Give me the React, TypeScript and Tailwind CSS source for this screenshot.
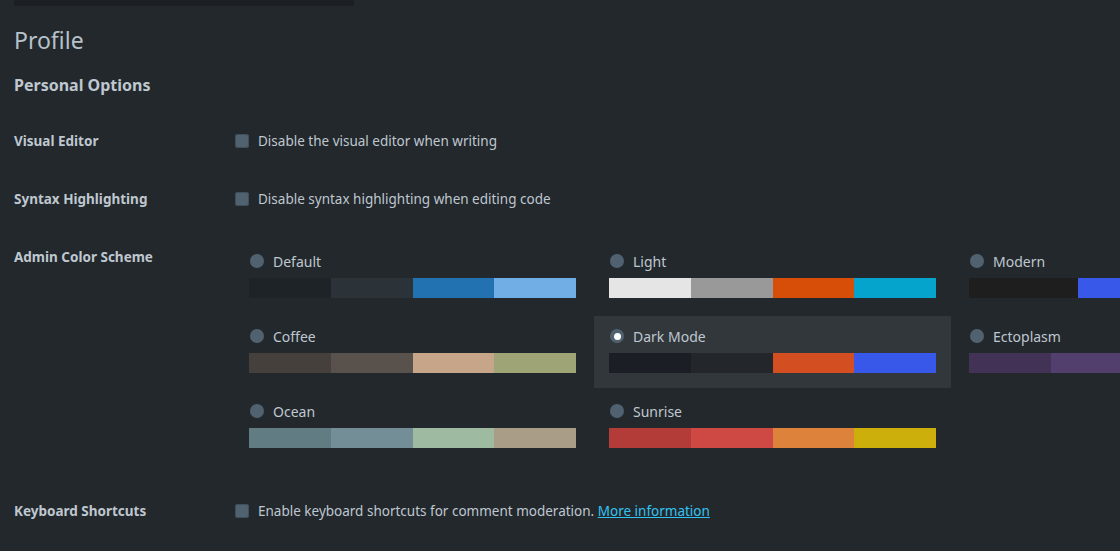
const schemes = [
  { name: "Default", colors: ["#1d2327", "#2c3338", "#2271b1", "#72aee6"] },
  { name: "Light", colors: ["#e5e5e5", "#999999", "#d64e07", "#04a4cc"] },
  { name: "Modern", colors: ["#1e1e1e", "#3858e9", "#33f078"] },
  { name: "Coffee", colors: ["#46403c", "#59524c", "#c7a589", "#9ea476"] },
  { name: "Dark Mode", colors: ["#1b1f25", "#23272b", "#d34e21", "#3858e9"], selected: true },
  { name: "Ectoplasm", colors: ["#413256", "#523f6d", "#a3b745", "#d46f15"] },
  { name: "Ocean", colors: ["#627c83", "#738e96", "#9ebaa0", "#aa9d88"] },
  { name: "Sunrise", colors: ["#b43c38", "#cf4944", "#dd823b", "#ccaf0b"] },
]

function Checkbox() {
  return <span className="block h-[14px] w-[14px] shrink-0 rounded-[3px] bg-[#50626f] shadow-[inset_0_0_0_1px_#3f4e59]" />
}

function Radio({ checked }: { checked?: boolean }) {
  return (
    <span className="flex h-[14px] w-[14px] shrink-0 items-center justify-center rounded-full bg-[#50626f]">
      {checked && <span className="block h-[7px] w-[7px] rounded-full bg-white" />}
    </span>
  )
}

function SchemeOption({ name, colors, selected }: { name: string; colors: string[]; selected?: boolean }) {
  return (
    <div className={`h-[72px] w-[357px] px-[15px] pt-[10px] ${selected ? "bg-[#32373c]" : ""}`}>
      <div className="flex h-[20px] items-center gap-[9px] pl-[1px]">
        <Radio checked={selected} />
        <span className="text-[14px]">{name}</span>
      </div>
      <div className="mt-[7px] flex h-[20px]">
        {colors.map((c) => (
          <div key={c} className="h-full flex-1" style={{ background: c }} />
        ))}
      </div>
    </div>
  )
}

export default function App() {
  return (
    <div className="h-[551px] overflow-hidden bg-[#23282d] pl-[14px] font-['Noto_Sans',sans-serif] text-[#bfc7cf]">
      <div className="h-[6px] w-[340px] bg-[#1c2024]" />
      <h1 className="mt-[20px] text-[23px] leading-[29px] font-normal text-[#b7c1ca]">Profile</h1>
      <h2 className="mt-[20px] text-[16px] leading-[20px] font-bold">Personal Options</h2>

      <div className="mt-[36px] flex h-[20px] items-center">
        <div className="w-[220px] text-[13.5px] font-bold">Visual Editor</div>
        <div className="flex items-center gap-[9px] pl-[1px] text-[13.5px]">
          <Checkbox />
          <span>Disable the visual editor when writing</span>
        </div>
      </div>

      <div className="mt-[38px] flex h-[20px] items-center">
        <div className="w-[220px] text-[13.5px] font-bold">Syntax Highlighting</div>
        <div className="flex items-center gap-[9px] pl-[1px] text-[13.5px]">
          <Checkbox />
          <span>Disable syntax highlighting when editing code</span>
        </div>
      </div>

      <div className="mt-[32px] flex">
        <div className="w-[220px] shrink-0 pt-[6px] text-[13.5px] leading-[20px] font-bold">Admin Color Scheme</div>
        <div className="grid grid-cols-[357px_357px_357px] gap-x-[3px] gap-y-[3px]">
          {schemes.map((s) => (
            <SchemeOption key={s.name} {...s} />
          ))}
        </div>
      </div>

      <div className="mt-[38px] flex h-[20px] items-center">
        <div className="w-[220px] text-[13.5px] font-bold">Keyboard Shortcuts</div>
        <div className="flex items-center gap-[9px] pl-[1px] text-[13.5px]">
          <Checkbox />
          <span>
            Enable keyboard shortcuts for comment moderation.{" "}
            <a href="#" className="text-[#33c3f0] underline">More information</a>
          </span>
        </div>
      </div>
    </div>
  )
}
